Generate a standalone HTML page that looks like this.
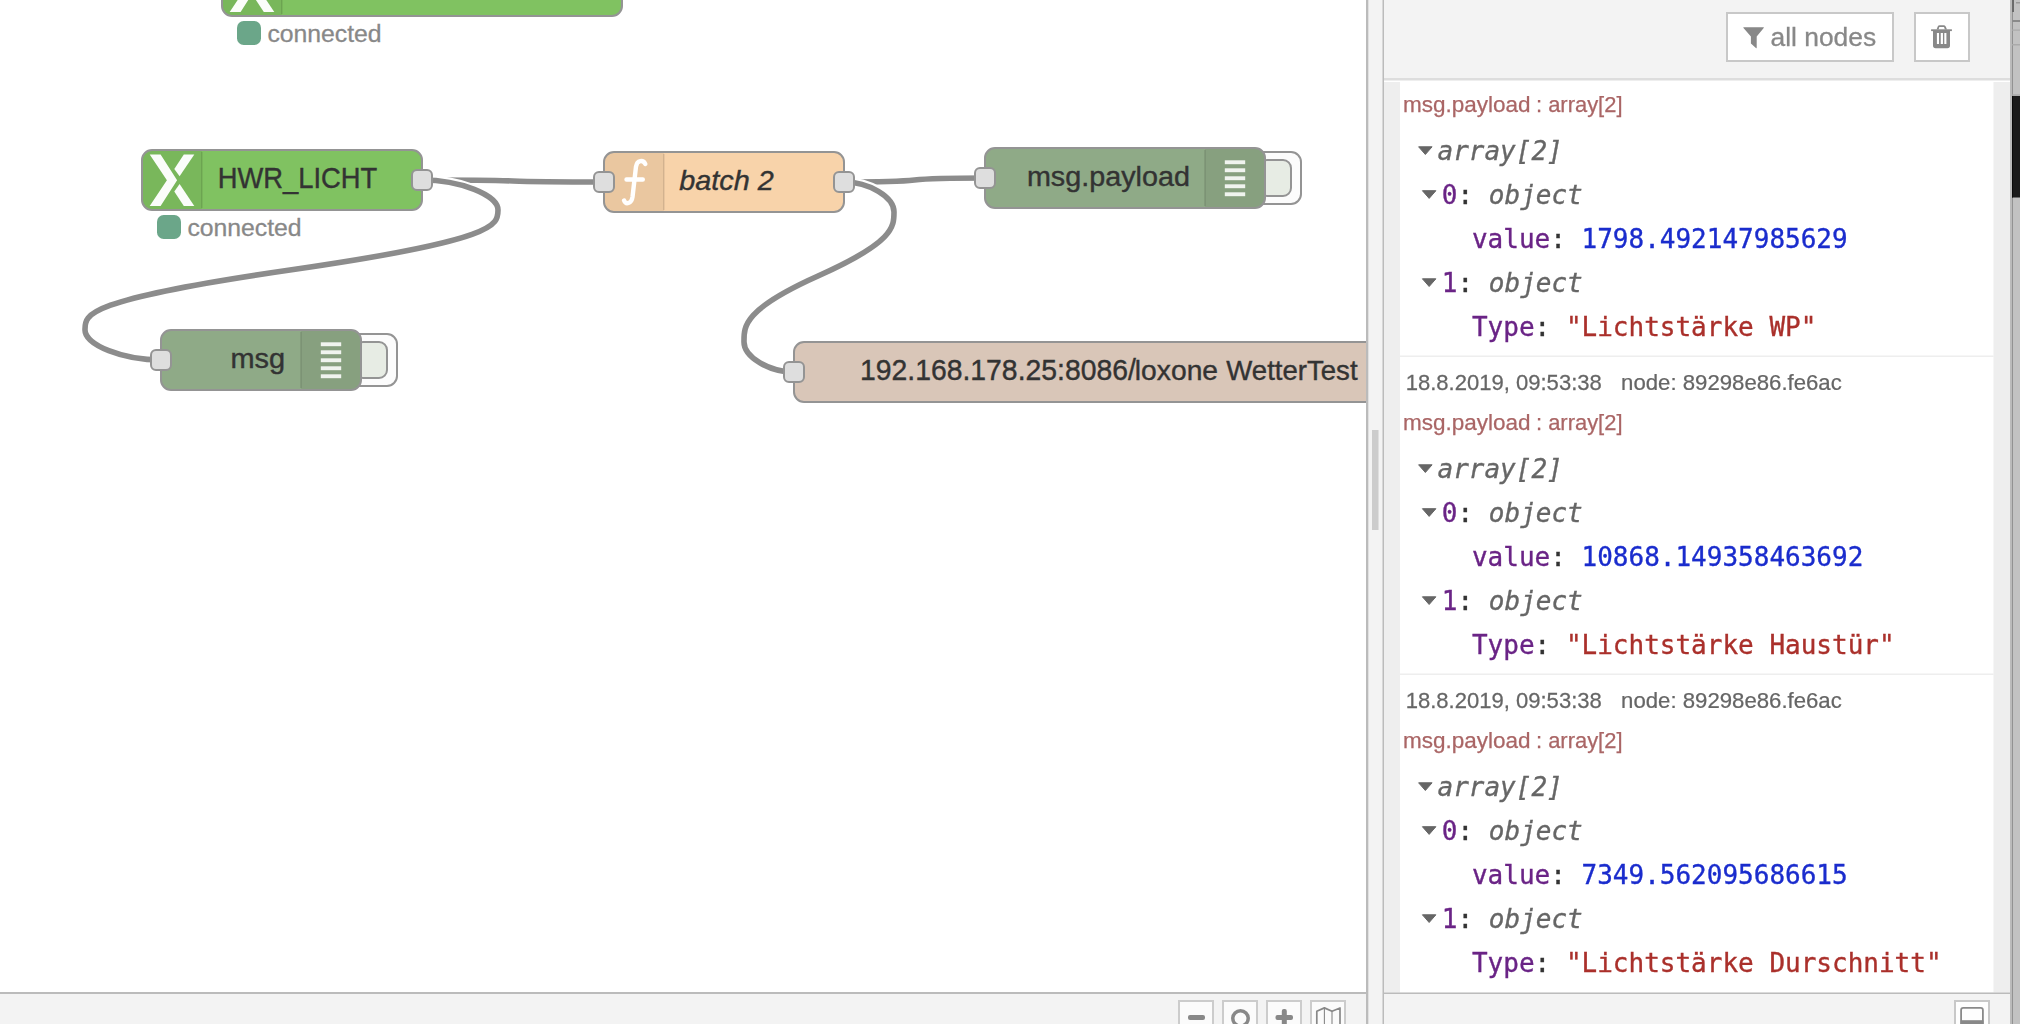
<!DOCTYPE html>
<html lang="de">
<head>
<meta charset="utf-8">
<title>Node-RED</title>
<style>
html,body{margin:0;padding:0;background:#fff;}
body{width:2020px;height:1024px;overflow:hidden;position:relative;}
svg{display:block;position:absolute;left:0;top:0;opacity:0.999;}
text{white-space:pre;}
.node{stroke:#949494;stroke-width:2;}
.port{fill:#dedede;stroke:#949494;stroke-width:2;}
.wire{fill:none;stroke:#8c8c8c;stroke-width:5.600;stroke-linecap:butt;}
.wireo{fill:none;stroke:#fff;stroke-width:10;stroke-linecap:butt;}
.tri{fill:#666;stroke:#666;stroke-width:1;stroke-linejoin:round;}
</style>
</head>
<body>
<svg width="2020" height="1024" viewBox="0 0 2020 1024">
<defs><clipPath id="cv"><rect x="0" y="0" width="1367" height="993"/></clipPath>
<filter id="soft" x="-10%" y="-10%" width="120%" height="120%"><feGaussianBlur stdDeviation="0.450"/></filter></defs>
<rect x="0" y="0" width="1367" height="993" fill="#fff"/>
<g clip-path="url(#cv)">
<g id="wires">
<path class="wireo" d="M422 180 C558.5 180 467.5 182 604 182"/><path class="wire" d="M422 180 C558.5 180 467.5 182 604 182"/>
<path class="wireo" d="M422 180 C460 180 498 195 498 210 S498 240 290 270 S85 315 85 330 S123 360 161 360"/><path class="wire" d="M422 180 C460 180 498 195 498 210 S498 240 290 270 S85 315 85 330 S123 360 161 360"/>
<path class="wireo" d="M844 182 C949.8 182 879.2 178 985 178"/><path class="wire" d="M844 182 C949.8 182 879.2 178 985 178"/>
<path class="wireo" d="M844 182 C869 182 894 197 894 212 S894 242 818 276 S744 327 744 342 S769 372 794 372"/><path class="wire" d="M844 182 C869 182 894 197 894 212 S894 242 818 276 S744 327 744 342 S769 372 794 372"/>
</g>
<g id="nodes">
<rect class="node" x="222" y="-44" width="400" height="60" rx="10" fill="#80c261"/>
<path d="M232 -43 h50 v58 h-50 a9 9 0 0 1 -9 -9 v-40 a9 9 0 0 1 9 -9 Z" fill="#000" fill-opacity="0.055"/><rect x="281.2" y="-42" width="1.300" height="56" fill="#000" fill-opacity="0.130"/>
<g fill="#fff" fill-opacity="0.970" filter="url(#soft)"><polygon points="229.7,-39.6 240.6,-39.6 257.1,-13.8 240.6,11.9 229.7,11.9 246.9,-13.8"/><polygon points="263.8,-39.6 274.3,-39.6 259.6,-17.7 254.3,-25"/><polygon points="254.3,-2.5 259.6,-9.9 274.3,11.9 263.8,11.9"/></g>
<rect x="237" y="21" width="24" height="24" rx="6.700" fill="#6ba689"/>
<text transform="translate(267.39 41.7) scale(1.0109 1)" style="font-family:'Liberation Sans','Helvetica Neue',Arial,Helvetica,sans-serif;font-size:24.5px;" fill="#888" stroke="#888" stroke-width="0.3">connected</text>
<rect class="node" x="142" y="150" width="280" height="60" rx="10" fill="#80c261"/>
<path d="M152 151 h50 v58 h-50 a9 9 0 0 1 -9 -9 v-40 a9 9 0 0 1 9 -9 Z" fill="#000" fill-opacity="0.055"/><rect x="201.2" y="152" width="1.300" height="56" fill="#000" fill-opacity="0.130"/>
<g fill="#fff" fill-opacity="0.970" filter="url(#soft)"><polygon points="149.7,154.4 160.6,154.4 177.1,180.2 160.6,205.9 149.7,205.9 166.9,180.2"/><polygon points="183.8,154.4 194.3,154.4 179.6,176.3 174.3,169"/><polygon points="174.3,191.5 179.6,184.1 194.3,205.9 183.8,205.9"/></g>
<text transform="translate(217.66 187.6) scale(0.9517 1)" style="font-family:'Liberation Sans','Helvetica Neue',Arial,Helvetica,sans-serif;font-size:28.75px;" fill="#333" stroke="#333" stroke-width="0.4">HWR_LICHT</text>
<rect class="port" x="412" y="170" width="20" height="20" rx="5"/>
<rect x="157" y="215" width="24" height="24" rx="6.700" fill="#6ba689"/>
<text transform="translate(187.39 235.7) scale(1.0109 1)" style="font-family:'Liberation Sans','Helvetica Neue',Arial,Helvetica,sans-serif;font-size:24.5px;" fill="#888" stroke="#888" stroke-width="0.3">connected</text>
<rect x="333" y="334" width="64" height="52" rx="10" fill="#fcfcfc" stroke="#949494" stroke-width="2"/><rect x="355" y="342" width="32" height="36" rx="8" fill="#e7ece4" stroke="#949494" stroke-width="2"/>
<rect class="node" x="161" y="330" width="200" height="60" rx="10" fill="#8faa87"/>
<path d="M301 331 h50 a9 9 0 0 1 9 9 v40 a9 9 0 0 1 -9 9 h-50 Z" fill="#000" fill-opacity="0.055"/><rect x="300.1" y="332" width="1.700" height="56" fill="#000" fill-opacity="0.100"/>
<rect x="320.8" y="342.3" width="20.400" height="3.900" fill="#fff" fill-opacity="0.880"/><rect x="320.8" y="350.3" width="20.400" height="3.900" fill="#fff" fill-opacity="0.880"/><rect x="320.8" y="358.3" width="20.400" height="3.900" fill="#fff" fill-opacity="0.880"/><rect x="320.8" y="366.3" width="20.400" height="3.900" fill="#fff" fill-opacity="0.880"/><rect x="320.8" y="374.3" width="20.400" height="3.900" fill="#fff" fill-opacity="0.880"/>
<text transform="translate(230.48 367.7) scale(1.0429 1)" style="font-family:'Liberation Sans','Helvetica Neue',Arial,Helvetica,sans-serif;font-size:27.75px;" fill="#333" stroke="#333" stroke-width="0.4">msg</text>
<rect class="port" x="151" y="350" width="20" height="20" rx="5"/>
<rect class="node" x="604" y="152" width="240" height="60" rx="10" fill="#f8d3aa"/>
<path d="M614 153 h50 v58 h-50 a9 9 0 0 1 -9 -9 v-40 a9 9 0 0 1 9 -9 Z" fill="#000" fill-opacity="0.055"/><rect x="663.2" y="154" width="1.300" height="56" fill="#000" fill-opacity="0.130"/>
<path d="M645.2 163.9 C643.2 159.6 637.1 159.9 636 166.600 L632.5 197 C631.5 204.100 625.7 204.700 624.100 200.500 M626.500 179.500 H642.800" fill="none" stroke="#fff" stroke-width="4.400" stroke-linecap="round" stroke-linejoin="round" filter="url(#soft)"/>
<text transform="translate(679.29 189.7) scale(1.0202 1)" style="font-family:'Liberation Sans','Helvetica Neue',Arial,Helvetica,sans-serif;font-size:28.25px;font-style:italic;" fill="#333" stroke="#333" stroke-width="0.4">batch 2</text>
<rect class="port" x="594" y="172" width="20" height="20" rx="5"/>
<rect class="port" x="834" y="172" width="20" height="20" rx="5"/>
<rect x="1237" y="152" width="64" height="52" rx="10" fill="#fcfcfc" stroke="#949494" stroke-width="2"/><rect x="1259" y="160" width="32" height="36" rx="8" fill="#e7ece4" stroke="#949494" stroke-width="2"/>
<rect class="node" x="985" y="148" width="280" height="60" rx="10" fill="#8faa87"/>
<path d="M1205 149 h50 a9 9 0 0 1 9 9 v40 a9 9 0 0 1 -9 9 h-50 Z" fill="#000" fill-opacity="0.055"/><rect x="1204.1" y="150" width="1.700" height="56" fill="#000" fill-opacity="0.100"/>
<rect x="1224.8" y="160.3" width="20.400" height="3.900" fill="#fff" fill-opacity="0.880"/><rect x="1224.8" y="168.3" width="20.400" height="3.900" fill="#fff" fill-opacity="0.880"/><rect x="1224.8" y="176.3" width="20.400" height="3.900" fill="#fff" fill-opacity="0.880"/><rect x="1224.8" y="184.3" width="20.400" height="3.900" fill="#fff" fill-opacity="0.880"/><rect x="1224.8" y="192.3" width="20.400" height="3.900" fill="#fff" fill-opacity="0.880"/>
<text transform="translate(1026.89 185.85) scale(1.0361 1)" style="font-family:'Liberation Sans','Helvetica Neue',Arial,Helvetica,sans-serif;font-size:27.75px;" fill="#333" stroke="#333" stroke-width="0.4">msg.payload</text>
<rect class="port" x="975" y="168" width="20" height="20" rx="5"/>
<rect class="node" x="794" y="342" width="640" height="60" rx="10" fill="#d9c6b8"/>
<text transform="translate(0 379.9)" style="font-family:'Liberation Sans','Helvetica Neue',Arial,Helvetica,sans-serif;" fill="#333" stroke="#333" stroke-width="0.4"><tspan x="860.02" font-size="29.25" textLength="275.83" lengthAdjust="spacingAndGlyphs">192.168.178.25:8086/</tspan><tspan x="1134.83" font-size="28" textLength="83.24" lengthAdjust="spacingAndGlyphs">loxone</tspan> <tspan x="1226.26" font-size="28.5" textLength="131.32" lengthAdjust="spacingAndGlyphs">WetterTest</tspan></text>
<rect class="port" x="784" y="362" width="20" height="20" rx="5"/>
</g>
</g>
<g id="frame">
<rect x="0" y="992" width="1367" height="32" fill="#f3f3f3"/>
<rect x="0" y="992" width="1368" height="2" fill="#bbb"/>
<rect x="1366" y="0" width="20" height="1024" fill="#f3f3f3"/>
<rect x="1366" y="0" width="2.300" height="1024" fill="#bbb"/>
<rect x="1382.500" y="0" width="1.500" height="1024" fill="#bbb"/>
<rect x="1372" y="430" width="6.500" height="100" fill="#ccc"/>
<g fill="#fbfbfb" stroke="#ccc" stroke-width="2">
<rect x="1179" y="1001" width="34" height="34"/>
<rect x="1223" y="1001" width="34" height="34"/>
<rect x="1267" y="1001" width="34" height="34"/>
<rect x="1311" y="1001" width="34" height="34"/>
</g>
<rect x="1188" y="1015" width="17" height="5" rx="2" fill="#888"/>
<circle cx="1240.500" cy="1018.400" r="7.700" fill="none" stroke="#888" stroke-width="3.500"/>
<rect x="1275.500" y="1015" width="17.500" height="5" rx="2" fill="#888"/>
<rect x="1281.800" y="1009" width="5" height="17" rx="2" fill="#888"/>
<path d="M1316.800 1011.300 L1324.400 1007.900 L1332 1011.300 L1340 1008 L1340 1030 L1316.800 1030 Z" fill="none" stroke="#888" stroke-width="1.700" stroke-linejoin="round"/><path d="M1324.400 1007.900 V1030 M1332 1011.300 V1030" fill="none" stroke="#888" stroke-width="1.100"/>
</g>
<g id="sidebar">
<rect x="1384" y="0" width="626" height="1024" fill="#fff"/>
<rect x="1384" y="0" width="626" height="78" fill="#f3f3f3"/>
<rect x="1384" y="78" width="626" height="2.500" fill="#ddd"/>
<rect x="1727" y="13" width="166" height="48" fill="#fff" stroke="#c8c8c8" stroke-width="2"/>
<path d="M1743.800 27.200 H1763.400 Q1764.400 27.200 1763.700 28.100 L1756.700 36.600 V47.600 Q1756.700 48.600 1755.900 47.900 L1750.900 43.600 V36.600 L1743.500 28.100 Q1742.800 27.200 1743.800 27.200 Z" fill="#888"/>
<text transform="translate(1770.49 45.6) scale(1.0058 1)" style="font-family:'Liberation Sans','Helvetica Neue',Arial,Helvetica,sans-serif;font-size:26.25px;" fill="#888" stroke="#888" stroke-width="0.3">all nodes</text>
<rect x="1915" y="13" width="54" height="48" fill="#fff" stroke="#c8c8c8" stroke-width="2"/>
<g id="trash" fill="#888">
<path d="M1931.100 29.300 H1951.900 V31.100 H1931.100 Z"/>
<path d="M1936.600 29.500 L1937.700 26.600 Q1938.200 25.200 1939.700 25.200 H1943.600 Q1945.100 25.200 1945.700 26.600 L1947 29.500 H1944.900 L1944 27.100 H1939.300 L1938.600 29.500 Z"/>
<path fill-rule="evenodd" d="M1933 31 H1950 V45.600 Q1950 48.200 1947.400 48.200 H1935.600 Q1933 48.200 1933 45.600 Z M1936.900 32.900 V44 H1939 V32.900 Z M1940.750 32.900 V44 H1942.950 V32.900 Z M1944.300 32.900 V44 H1946.400 V32.900 Z"/>
</g>
<rect x="1384" y="82" width="16" height="910.500" fill="#eee"/>
<rect x="1993.500" y="82" width="16.500" height="910.500" fill="#eee"/>
<rect x="1400" y="355.500" width="593.500" height="1.500" fill="#eee"/>
<rect x="1400" y="673.500" width="593.500" height="1.500" fill="#eee"/>
<rect x="1384" y="992.500" width="626" height="31.500" fill="#f3f3f3"/>
<rect x="1384" y="992.500" width="626" height="1.500" fill="#bbb"/>
<rect x="1955" y="1001" width="34" height="30" fill="#fefefe" stroke="#c8c8c8" stroke-width="2"/>
<rect x="1961.100" y="1007.900" width="21.800" height="18" rx="2.200" fill="none" stroke="#8a8a8a" stroke-width="1.800"/>
<rect x="1960.600" y="1020.200" width="22.800" height="5" fill="#888"/>
<rect x="2010" y="0" width="2" height="1024" fill="#bbb"/>
<rect x="2012" y="0" width="8" height="1024" fill="#c2c2c2"/>
<rect x="2012" y="0" width="1" height="1024" fill="#929292"/>
<rect x="2012" y="94.400" width="8" height="1.300" fill="#a4a4a4"/>
<rect x="2012" y="96" width="8" height="101.500" fill="#1b1b1b"/>
<rect x="2012" y="96" width="1" height="101.500" fill="#0a0a0a"/>
<rect x="2012" y="0" width="2" height="12" fill="#6a6a6a"/>
<rect x="2016" y="2" width="4" height="1.500" fill="#999"/>
<rect x="2012" y="20" width="8" height="2" fill="#8a8a8a"/>
<rect x="2012" y="29.500" width="8" height="1.200" fill="#aaa"/>
<rect x="2012" y="44" width="8" height="1.500" fill="#aaa"/>
<g id="msgs">
<text transform="translate(0 111.6)" style="font-family:'Liberation Sans','Helvetica Neue',Arial,Helvetica,sans-serif;" fill="#a66" stroke="#a66" stroke-width="0.25"><tspan x="1402.98" font-size="21.5" textLength="127.59" lengthAdjust="spacingAndGlyphs">msg.payload</tspan> <tspan x="1535.96" font-size="21.5" textLength="86.57" lengthAdjust="spacingAndGlyphs">: array[2]</tspan></text>
<path class="tri" d="M1418.6 146.8 h13.500 l-6.750 7.700 Z"/>
<text transform="translate(1437.5 159.7)" style="font-family:'DejaVu Sans Mono','Liberation Mono',Menlo,monospace;font-size:26px;font-style:italic;" fill="#666" stroke="#666" stroke-width="0.35">array[2]</text>
<path class="tri" d="M1422.4 190.7 h13.500 l-6.750 7.700 Z"/>
<text transform="translate(1441.85 203.7)" style="font-family:'DejaVu Sans Mono','Liberation Mono',Menlo,monospace;font-size:26px;" fill="#333" stroke="#333" stroke-width="0.35"><tspan fill="#6a2486" stroke="#6a2486">0</tspan>: <tspan fill="#666" stroke="#666" font-style="italic">object</tspan></text>
<text transform="translate(1471.95 247.65)" style="font-family:'DejaVu Sans Mono','Liberation Mono',Menlo,monospace;font-size:26px;" fill="#333" stroke="#333" stroke-width="0.35"><tspan fill="#6a2486" stroke="#6a2486">value</tspan>: <tspan fill="#1a2ccd" stroke="#1a2ccd">1798.492147985629</tspan></text>
<path class="tri" d="M1422.4 278.8 h13.500 l-6.750 7.700 Z"/>
<text transform="translate(1441.85 291.7)" style="font-family:'DejaVu Sans Mono','Liberation Mono',Menlo,monospace;font-size:26px;" fill="#333" stroke="#333" stroke-width="0.35"><tspan fill="#6a2486" stroke="#6a2486">1</tspan>: <tspan fill="#666" stroke="#666" font-style="italic">object</tspan></text>
<text transform="translate(1471.95 335.6)" style="font-family:'DejaVu Sans Mono','Liberation Mono',Menlo,monospace;font-size:26px;" fill="#333" stroke="#333" stroke-width="0.35"><tspan fill="#6a2486" stroke="#6a2486">Type</tspan>: <tspan fill="#aa302b" stroke="#aa302b">"Lichtstärke WP"</tspan></text>
<text transform="translate(1405.7 390.06) scale(0.9692 1)" style="font-family:'Liberation Sans','Helvetica Neue',Arial,Helvetica,sans-serif;font-size:22.75px;" fill="#666" stroke="#666" stroke-width="0.25">18.8.2019, 09:53:38</text>
<text transform="translate(1621.12 390.06) scale(0.9858 1)" style="font-family:'Liberation Sans','Helvetica Neue',Arial,Helvetica,sans-serif;font-size:22.5px;" fill="#666" stroke="#666" stroke-width="0.25">node: 89298e86.fe6ac</text>
<text transform="translate(0 429.6)" style="font-family:'Liberation Sans','Helvetica Neue',Arial,Helvetica,sans-serif;" fill="#a66" stroke="#a66" stroke-width="0.25"><tspan x="1402.98" font-size="21.5" textLength="127.59" lengthAdjust="spacingAndGlyphs">msg.payload</tspan> <tspan x="1535.96" font-size="21.5" textLength="86.57" lengthAdjust="spacingAndGlyphs">: array[2]</tspan></text>
<path class="tri" d="M1418.6 464.8 h13.500 l-6.750 7.700 Z"/>
<text transform="translate(1437.5 477.7)" style="font-family:'DejaVu Sans Mono','Liberation Mono',Menlo,monospace;font-size:26px;font-style:italic;" fill="#666" stroke="#666" stroke-width="0.35">array[2]</text>
<path class="tri" d="M1422.4 508.7 h13.500 l-6.750 7.700 Z"/>
<text transform="translate(1441.85 521.7)" style="font-family:'DejaVu Sans Mono','Liberation Mono',Menlo,monospace;font-size:26px;" fill="#333" stroke="#333" stroke-width="0.35"><tspan fill="#6a2486" stroke="#6a2486">0</tspan>: <tspan fill="#666" stroke="#666" font-style="italic">object</tspan></text>
<text transform="translate(1471.95 565.65)" style="font-family:'DejaVu Sans Mono','Liberation Mono',Menlo,monospace;font-size:26px;" fill="#333" stroke="#333" stroke-width="0.35"><tspan fill="#6a2486" stroke="#6a2486">value</tspan>: <tspan fill="#1a2ccd" stroke="#1a2ccd">10868.149358463692</tspan></text>
<path class="tri" d="M1422.4 596.8 h13.500 l-6.750 7.700 Z"/>
<text transform="translate(1441.85 609.7)" style="font-family:'DejaVu Sans Mono','Liberation Mono',Menlo,monospace;font-size:26px;" fill="#333" stroke="#333" stroke-width="0.35"><tspan fill="#6a2486" stroke="#6a2486">1</tspan>: <tspan fill="#666" stroke="#666" font-style="italic">object</tspan></text>
<text transform="translate(1471.95 653.6)" style="font-family:'DejaVu Sans Mono','Liberation Mono',Menlo,monospace;font-size:26px;" fill="#333" stroke="#333" stroke-width="0.35"><tspan fill="#6a2486" stroke="#6a2486">Type</tspan>: <tspan fill="#aa302b" stroke="#aa302b">"Lichtstärke Haustür"</tspan></text>
<text transform="translate(1405.7 708.06) scale(0.9692 1)" style="font-family:'Liberation Sans','Helvetica Neue',Arial,Helvetica,sans-serif;font-size:22.75px;" fill="#666" stroke="#666" stroke-width="0.25">18.8.2019, 09:53:38</text>
<text transform="translate(1621.12 708.06) scale(0.9858 1)" style="font-family:'Liberation Sans','Helvetica Neue',Arial,Helvetica,sans-serif;font-size:22.5px;" fill="#666" stroke="#666" stroke-width="0.25">node: 89298e86.fe6ac</text>
<text transform="translate(0 747.6)" style="font-family:'Liberation Sans','Helvetica Neue',Arial,Helvetica,sans-serif;" fill="#a66" stroke="#a66" stroke-width="0.25"><tspan x="1402.98" font-size="21.5" textLength="127.59" lengthAdjust="spacingAndGlyphs">msg.payload</tspan> <tspan x="1535.96" font-size="21.5" textLength="86.57" lengthAdjust="spacingAndGlyphs">: array[2]</tspan></text>
<path class="tri" d="M1418.6 782.8 h13.500 l-6.750 7.700 Z"/>
<text transform="translate(1437.5 795.7)" style="font-family:'DejaVu Sans Mono','Liberation Mono',Menlo,monospace;font-size:26px;font-style:italic;" fill="#666" stroke="#666" stroke-width="0.35">array[2]</text>
<path class="tri" d="M1422.4 826.7 h13.500 l-6.750 7.700 Z"/>
<text transform="translate(1441.85 839.7)" style="font-family:'DejaVu Sans Mono','Liberation Mono',Menlo,monospace;font-size:26px;" fill="#333" stroke="#333" stroke-width="0.35"><tspan fill="#6a2486" stroke="#6a2486">0</tspan>: <tspan fill="#666" stroke="#666" font-style="italic">object</tspan></text>
<text transform="translate(1471.95 883.65)" style="font-family:'DejaVu Sans Mono','Liberation Mono',Menlo,monospace;font-size:26px;" fill="#333" stroke="#333" stroke-width="0.35"><tspan fill="#6a2486" stroke="#6a2486">value</tspan>: <tspan fill="#1a2ccd" stroke="#1a2ccd">7349.562095686615</tspan></text>
<path class="tri" d="M1422.4 914.8 h13.500 l-6.750 7.700 Z"/>
<text transform="translate(1441.85 927.7)" style="font-family:'DejaVu Sans Mono','Liberation Mono',Menlo,monospace;font-size:26px;" fill="#333" stroke="#333" stroke-width="0.35"><tspan fill="#6a2486" stroke="#6a2486">1</tspan>: <tspan fill="#666" stroke="#666" font-style="italic">object</tspan></text>
<text transform="translate(1471.95 971.6)" style="font-family:'DejaVu Sans Mono','Liberation Mono',Menlo,monospace;font-size:26px;" fill="#333" stroke="#333" stroke-width="0.35"><tspan fill="#6a2486" stroke="#6a2486">Type</tspan>: <tspan fill="#aa302b" stroke="#aa302b">"Lichtstärke Durschnitt"</tspan></text>
</g>
</g>
</svg>
</body>
</html>
